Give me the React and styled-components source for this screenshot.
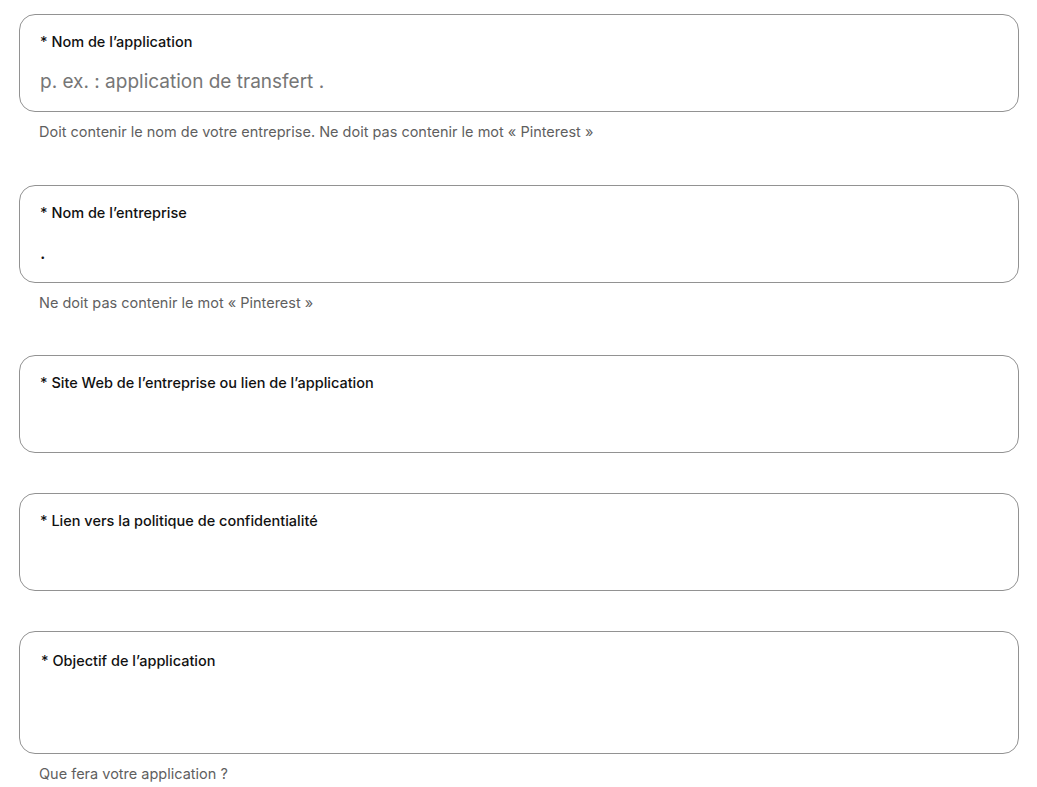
import React from 'react';
import styled, {createGlobalStyle} from 'styled-components';

const Global = createGlobalStyle`
  html, body {
    margin: 0;
    padding: 0;
    background: #fff;
  }
  body {
    font-family: Inter, "Noto Sans", "Liberation Sans", sans-serif;
    color: #111;
  }
`;

const Form = styled.form`
  display: flex;
  flex-direction: column;
  gap: 40px;
  padding: 14px 18px 0 19px;
`;

const Field = styled.div`
  display: flex;
  flex-direction: column;
`;

const Box = styled.label`
  display: flex;
  flex-direction: column;
  box-sizing: border-box;
  height: ${p => (p.$tall ? '123px' : '98px')};
  border: 1px solid #929292;
  border-radius: 16px;
  padding: ${p => (p.$tall ? '19px 20px 0 21px' : '17px 20px 0 20px')};
`;

const Label = styled.span`
  font-size: 14.5px;
  line-height: 20px;
  font-weight: 500;
  color: #111;
`;

const Input = styled.input`
  margin-top: 18px;
  padding: 0;
  border: none;
  outline: none;
  background: transparent;
  font-family: inherit;
  font-size: 19px;
  line-height: 24px;
  height: 24px;
  color: #111;

  &::placeholder {
    color: #767676;
  }
`;

const Help = styled.div`
  padding: 10px 0 2.5px 20px;
  font-size: 14.5px;
  line-height: 20px;
  color: #5f5f5f;
`;

const fields = [
  {
    label: '* Nom de l’application',
    placeholder: 'p. ex. : application de transfert .',
    help: 'Doit contenir le nom de votre entreprise. Ne doit pas contenir le mot « Pinterest »',
  },
  {
    label: '* Nom de l’entreprise',
    value: '.',
    help: 'Ne doit pas contenir le mot « Pinterest »',
  },
  {label: '* Site Web de l’entreprise ou lien de l’application'},
  {label: '* Lien vers la politique de confidentialité'},
  {label: '* Objectif de l’application', tall: true, help: 'Que fera votre application ?'},
];

export default function App() {
  return (
    <>
      <Global />
      <Form onSubmit={e => e.preventDefault()}>
        {fields.map(f => (
          <Field key={f.label}>
            <Box $tall={f.tall}>
              <Label>{f.label}</Label>
              {!f.tall && (
                <Input placeholder={f.placeholder} defaultValue={f.value} />
              )}
            </Box>
            {f.help && <Help>{f.help}</Help>}
          </Field>
        ))}
      </Form>
    </>
  );
}
